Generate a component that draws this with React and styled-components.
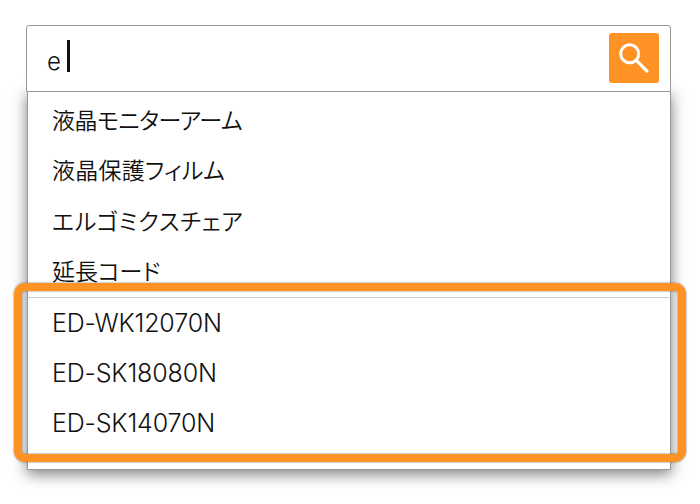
import React from 'react';
import styled, { createGlobalStyle } from 'styled-components';

const GlobalStyle = createGlobalStyle`
  * {
    box-sizing: border-box;
  }
  body {
    margin: 0;
    background: #fff;
    overflow: hidden;
  }
`;

const Page = styled.div`
  position: relative;
  height: 504px;
  padding: 25px 29px 0 26px;
  color: #111;
  font-family: 'Noto Sans CJK JP', sans-serif;
`;

const SearchBar = styled.div`
  position: relative;
  z-index: 1;
  display: flex;
  align-items: center;
  justify-content: space-between;
  height: 67px;
  padding: 0 11px 2px 20px;
  background: #fff;
  border: 1px solid #999;
  border-radius: 3px 3px 0 0;
`;

const Query = styled.div`
  display: flex;
  align-items: center;
  gap: 6px;
  font-family: Inter, sans-serif;
  font-size: 24px;
  font-weight: 350;
  line-height: 32px;
`;

const Typed = styled.span`
  padding-top: 9px;
`;

const Caret = styled.span`
  width: 3px;
  height: 32px;
  margin-bottom: 4px;
  background: #111;
`;

const SearchButton = styled.button`
  display: flex;
  width: 50px;
  height: 50px;
  padding: 0;
  background: #ff9224;
  border: 0;
  border-radius: 3px;
`;

const Panel = styled.div`
  height: 379px;
  margin: -1px 0 0 1px;
  padding-top: 3px;
  background: #fff;
  border: 1px solid #999;
  border-top: 0;
  box-shadow: 0 4px 14px rgba(0, 0, 0, 0.52);
`;

const List = styled.ul`
  margin: 0;
  padding: 0 0 0 24px;
  list-style: none;
`;

const CodeList = styled(List)`
  margin-top: 1px;
  border-top: 1px solid #ccc;
`;

const Item = styled.li`
  height: 50.4px;
  font-size: 23px;
  font-weight: 350;
  line-height: 50px;
  white-space: nowrap;
  font-feature-settings: 'palt';
  letter-spacing: ${props => props.$spacing || 0}px;
`;

const CodeItem = styled(Item)`
  font-family: Inter, sans-serif;
  font-size: 25px;
  font-weight: 320;
  font-feature-settings: 'calt' 0;
`;

// outlines the product codes and overlaps both panel edges
const Highlight = styled.div`
  position: absolute;
  top: 283px;
  left: 14px;
  width: 672px;
  height: 179px;
  z-index: 2;
  border: 8px solid #ff9224;
  border-radius: 11px;
  box-shadow: 0 0 2px rgba(0, 0, 0, 0.6), inset 0 0 2px rgba(0, 0, 0, 0.6);
`;

const words = [
  { text: '液晶モニターアーム', spacing: -0.5 },
  { text: '液晶保護フィルム', spacing: 0.25 },
  { text: 'エルゴミクスチェア', spacing: 0.65 },
  { text: '延長コード', spacing: -0.1 }
];

const codes = [
  { text: 'ED-WK12070N', spacing: -0.15 },
  { text: 'ED-SK18080N', spacing: -0.15 },
  { text: 'ED-SK14070N', spacing: -0.15 }
];

const SearchIcon = () => (
  <svg width="50" height="50" viewBox="0 0 50 50" fill="none" stroke="#fff">
    <circle cx="20.7" cy="20.8" r="9" strokeWidth="3" />
    <path d="M27.3 27.4L38 38.2" strokeWidth="3.2" strokeLinecap="round" />
  </svg>
);

const App = () => (
  <Page>
    <GlobalStyle />
    <SearchBar>
      <Query>
        <Typed>e</Typed>
        <Caret />
      </Query>
      <SearchButton aria-label="検索">
        <SearchIcon />
      </SearchButton>
    </SearchBar>
    <Panel>
      <List>
        {words.map(word => (
          <Item key={word.text} $spacing={word.spacing}>{word.text}</Item>
        ))}
      </List>
      <CodeList>
        {codes.map(code => (
          <CodeItem key={code.text} $spacing={code.spacing}>{code.text}</CodeItem>
        ))}
      </CodeList>
    </Panel>
    <Highlight />
  </Page>
);

export default App;
